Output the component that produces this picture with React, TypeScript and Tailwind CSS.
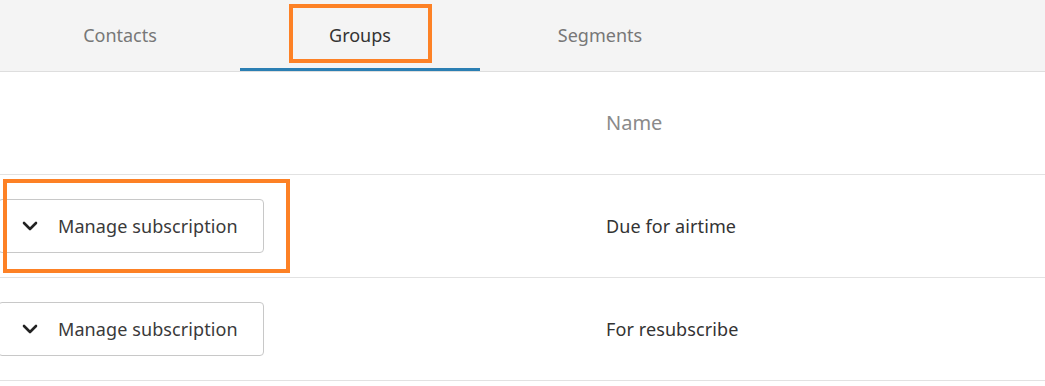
import React from "react";

const font = { fontFamily: '"Source Sans Pro", "Noto Sans", "Open Sans", sans-serif' };

function Chevron() {
  return (
    <svg width="16" height="10" viewBox="0 0 16 10" className="shrink-0">
      <path d="M2 2 L8 8 L14 2" fill="none" stroke="#222" strokeWidth="2.6" strokeLinecap="round" strokeLinejoin="round" />
    </svg>
  );
}

function Row({ name }: { name: string }) {
  return (
    <div className="flex h-[103px] items-center border-b border-[#e2e2e2]">
      <div className="w-[606px] shrink-0">
        <button className="-ml-[2px] flex h-[54px] w-[266px] items-center rounded-[4px] border border-[#c8c8c8] bg-white pl-[23px] text-[18px] tracking-[0.1px] text-[#3a3a3a]">
          <Chevron />
          <span className="ml-[20px]">Manage subscription</span>
        </button>
      </div>
      <div className="text-[18px] tracking-[0.1px] text-[#333]">{name}</div>
    </div>
  );
}

export default function App() {
  return (
    <div className="relative h-[386px] w-[1045px] overflow-hidden bg-white" style={font}>
      <div className="flex h-[72px] border-b border-[#dedede] bg-[#f4f4f4]">
        <div className="flex w-[240px] items-center justify-center text-[18px] text-[#777]">Contacts</div>
        <div className="flex w-[240px] items-center justify-center border-b-[3px] border-[#2b7fb3] pt-[3px] text-[18px] text-[#333]">Groups</div>
        <div className="flex w-[240px] items-center justify-center text-[18px] text-[#777]">Segments</div>
      </div>
      <div className="flex h-[103px] items-center border-b border-[#e2e2e2]">
        <div className="w-[606px] shrink-0" />
        <div className="text-[20px] text-[#8a8a8a]">Name</div>
      </div>
      <Row name="Due for airtime" />
      <Row name="For resubscribe" />

      <div className="pointer-events-none absolute left-[289px] top-[4px] h-[59px] w-[143px] border-[4px] border-[#fd8125]" />
      <div className="pointer-events-none absolute left-[3px] top-[179px] h-[94px] w-[287px] border-[4px] border-[#fd8125]" />
    </div>
  );
}
